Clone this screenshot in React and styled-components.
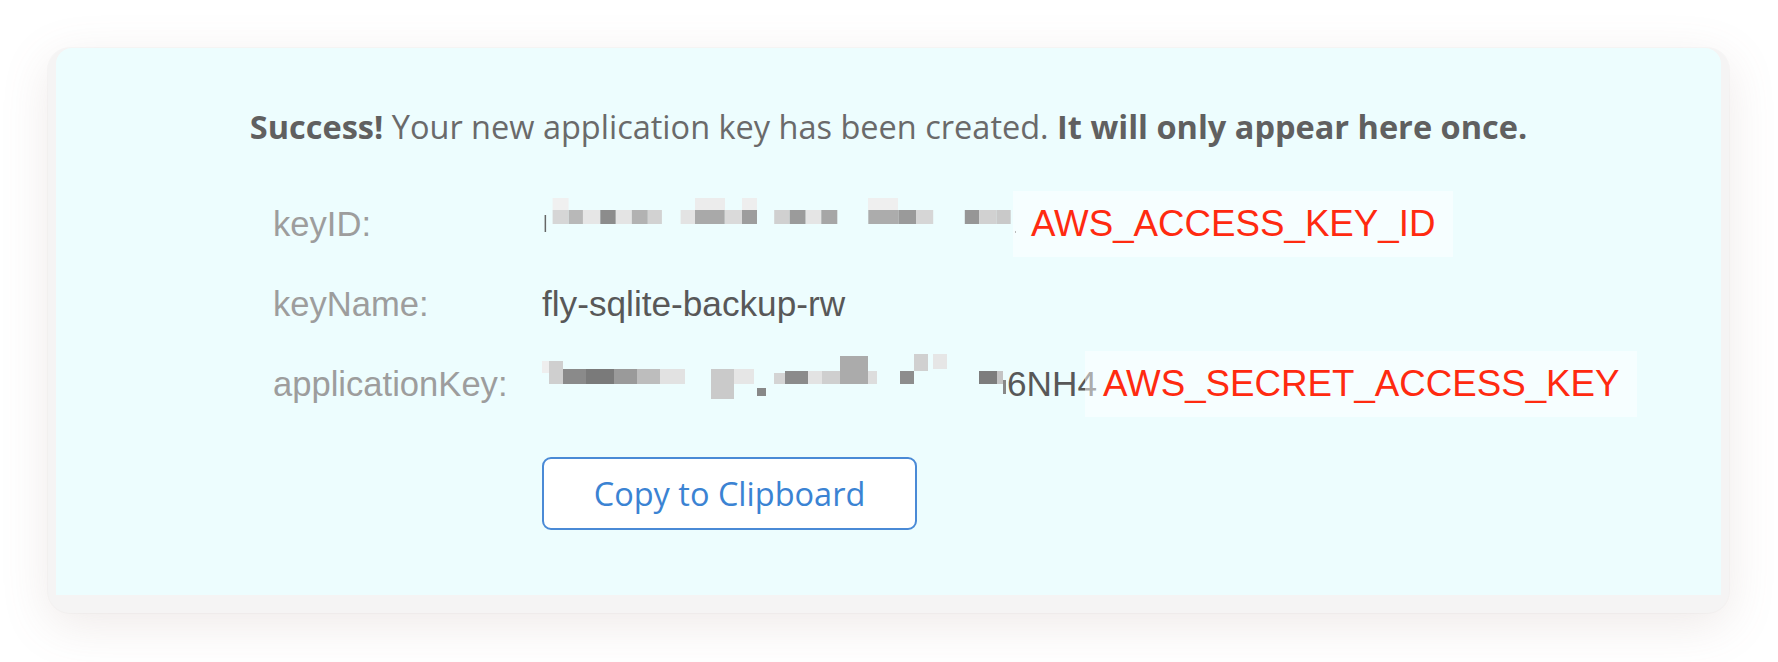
import React from "react";
import styled, { createGlobalStyle } from "styled-components";

const Global = createGlobalStyle`
  html, body { margin: 0; padding: 0; background: #ffffff; }
  #root { width: 1778px; height: 662px; }
`;

const Page = styled.div`
  box-sizing: border-box;
  width: 1778px;
  height: 662px;
  padding: 48px 49px 0 48px;
  background: #ffffff;
`;

const Card = styled.div`
  box-sizing: border-box;
  width: 1681px;
  height: 565px;
  padding: 0 8px 18px;
  background: #f5f4f4;
  border-radius: 22px;
  box-shadow: 0 12px 48px rgba(150, 115, 105, 0.15), 0 0 0 1px rgba(120, 120, 120, 0.04);
`;

const Panel = styled.div`
  box-sizing: border-box;
  height: 100%;
  padding-top: 57px;
  background: #edfdfe;
  border-radius: 16px 16px 0 0;
  display: flex;
  flex-direction: column;
`;

const Headline = styled.p`
  margin: 0;
  text-align: center;
  font-family: "Open Sans", "Noto Sans", sans-serif;
  font-size: 32.5px;
  line-height: 44px;
  color: #6a6a6a;
`;

const Strong = styled.strong`
  font-weight: 700;
  color: #606060;
`;

const Fields = styled.div`
  margin-top: 35px;
  padding-left: 217px;
  display: grid;
  grid-template-columns: 269px auto;
  grid-auto-rows: 80px;
  align-items: center;
`;

const Label = styled.div`
  font-family: "Liberation Sans", Arial, sans-serif;
  font-size: 34.6px;
  line-height: 38px;
  color: #9d9d9d;
`;

const Value = styled.div`
  display: flex;
  align-items: center;
  height: 100%;
  font-family: "Liberation Sans", Arial, sans-serif;
  font-size: 35.2px;
  line-height: 38px;
  color: #585858;
`;

const Mosaic = styled.svg`
  display: block;
  flex: none;
`;

const RedTag = styled.span`
  display: flex;
  align-items: center;
  height: 66px;
  padding: 0 18px;
  margin-left: ${(p) => p.$overlap}px;
  background: rgba(255, 255, 255, 0.5);
  font-family: "Liberation Sans", Arial, sans-serif;
  font-size: 36.7px;
  color: #ff2a10;
`;

const CopyButton = styled.button`
  box-sizing: border-box;
  margin: 33px 0 0 486px;
  width: 375px;
  height: 73px;
  padding: 0;
  border: 2px solid #4a8ad6;
  border-radius: 9px;
  background: #ffffff;
  color: #3b83d3;
  font-family: "Open Sans", "Noto Sans", sans-serif;
  font-size: 32.5px;
  cursor: pointer;
`;

const keyIdCells = [
  [10.6, 4, 16, 12, "#f0f0f0"],
  [153, 4, 30, 12, "#ececec"],
  [200, 4, 15, 12, "#eeeeee"],
  [326, 4, 30, 12, "#efefef"],
  [2.6, 21, 1.5, 17, "#666666"],
  [10.6, 16, 16, 14, "#d6d6d6"],
  [26.7, 16, 14.3, 14, "#b8b8b8"],
  [40.9, 16, 17.4, 14, "#e6e6e6"],
  [58.3, 16, 15.5, 14, "#8c8c8c"],
  [73.8, 16, 16, 14, "#e4e4e4"],
  [89.8, 16, 16, 14, "#b2b2b2"],
  [105.9, 16, 14, 14, "#d2d2d2"],
  [138.6, 16, 14.4, 14, "#e3e3e3"],
  [153, 16, 29.8, 14, "#a9a9a9"],
  [182.8, 16, 17.2, 14, "#dadada"],
  [200, 16, 15, 14, "#9d9d9d"],
  [232.2, 16, 15.5, 14, "#d0d0d0"],
  [247.7, 16, 16, 14, "#9b9b9b"],
  [263.7, 16, 15.6, 14, "#e5e5e5"],
  [279.3, 16, 16, 14, "#a6a6a6"],
  [326.3, 16, 30.5, 14, "#acacac"],
  [356.8, 16, 17.2, 14, "#9a9a9a"],
  [374, 16, 17.2, 14, "#d6d6d6"],
  [422.8, 16, 14.3, 14, "#969696"],
  [437.1, 16, 17.3, 14, "#d1d1d1"],
  [454.4, 16, 14.3, 14, "#c9c9c9"],
  [473, 37, 2, 2, "#777777"],
];

const appKeyCells = [
  [0, 7, 7, 12, "#eeeeee"],
  [7, 7, 14, 23, "#cfcfcf"],
  [21, 15, 23, 15, "#8a8a8a"],
  [44, 15, 28, 15, "#7a7a7a"],
  [72, 15, 23, 15, "#9a9a9a"],
  [95, 15, 23, 15, "#bdbdbd"],
  [118, 15, 25, 15, "#e2e2e2"],
  [169, 15, 23, 30, "#cacaca"],
  [192, 15, 20, 15, "#e6e6e6"],
  [215, 34, 9, 8, "#888888"],
  [232, 19, 11, 11, "#d4d4d4"],
  [243, 17, 23, 13, "#8b8b8b"],
  [266, 17, 14, 13, "#e3e3e3"],
  [280, 17, 18, 13, "#cfcfcf"],
  [298, 2, 28, 28, "#ababab"],
  [326, 17, 9, 13, "#dddddd"],
  [358, 17, 14, 13, "#8d8d8d"],
  [372, 0, 14, 17, "#d0d0d0"],
  [391, 0, 14, 15, "#e6e6e6"],
  [437, 17, 18, 13, "#7d7d7d"],
  [455, 17, 6, 13, "#c4c4c4"],
  [461, 26, 3, 14, "#888888"],
];

function Pixelated({ width, cells }) {
  return (
    <Mosaic width={width} height={60} viewBox={`0 0 ${width} 60`} aria-hidden="true">
      {cells.map(([x, y, w, h, fill], i) => (
        <rect key={i} x={x} y={y} width={w} height={h} fill={fill} />
      ))}
    </Mosaic>
  );
}

export default function App() {
  return (
    <>
      <Global />
      <Page>
        <Card>
          <Panel>
            <Headline>
              <Strong>Success!</Strong> Your new application key has been created.{" "}
              <Strong>It will only appear here once.</Strong>
            </Headline>
            <Fields>
              <Label>keyID:</Label>
              <Value>
                <Pixelated width={474} cells={keyIdCells} />
                <RedTag $overlap={-3}>AWS_ACCESS_KEY_ID</RedTag>
              </Value>
              <Label>keyName:</Label>
              <Value>fly-sqlite-backup-rw</Value>
              <Label>applicationKey:</Label>
              <Value>
                <Pixelated width={465} cells={appKeyCells} />
                <span>6NH4</span>
                <RedTag $overlap={-12}>AWS_SECRET_ACCESS_KEY</RedTag>
              </Value>
            </Fields>
            <CopyButton type="button">Copy to Clipboard</CopyButton>
          </Panel>
        </Card>
      </Page>
    </>
  );
}
